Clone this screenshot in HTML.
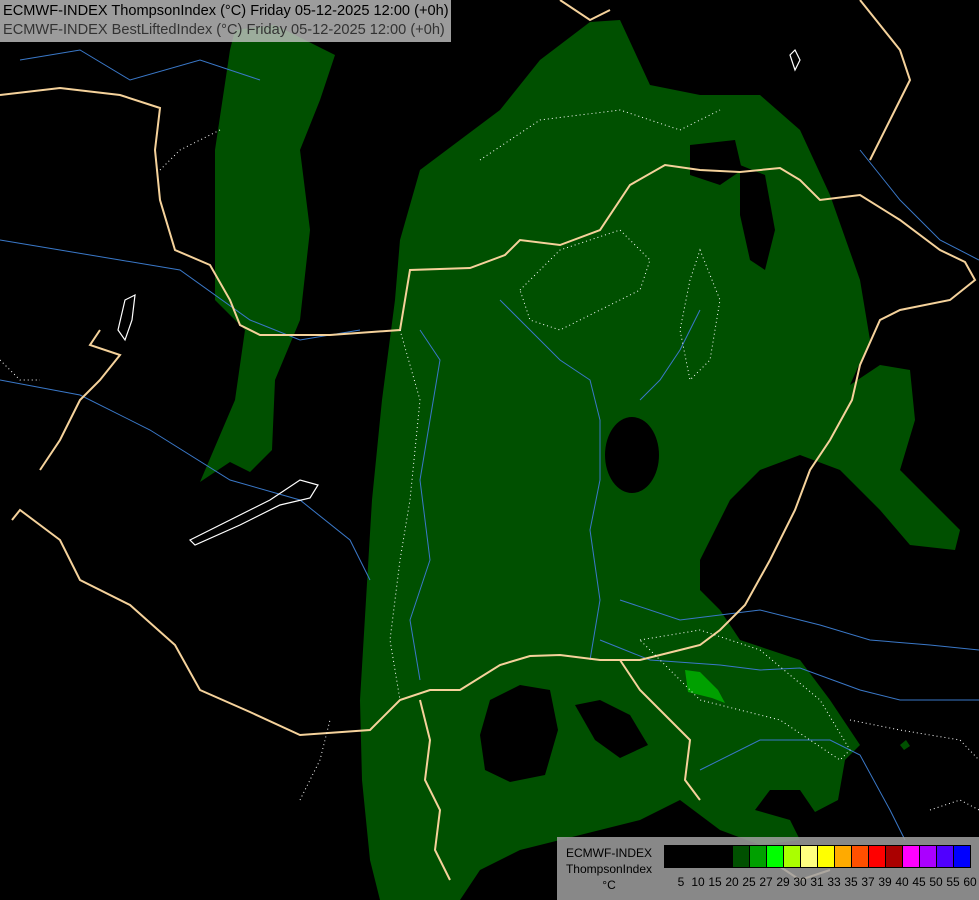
<!DOCTYPE html>
<html><head><meta charset="utf-8"><style>
html,body{margin:0;padding:0;background:#000;}
#w{position:relative;width:979px;height:900px;overflow:hidden;background:#000;font-family:"Liberation Sans",sans-serif;}
svg{position:absolute;left:0;top:0;}
.hdr{position:absolute;left:0;top:0;width:451px;height:42px;background:rgba(200,200,200,0.78);font-size:14.6px;line-height:19px;padding-left:3px;box-sizing:border-box;padding-top:2px;white-space:nowrap;}
.hdr div:nth-child(2){color:#333;}
.leg{position:absolute;left:557px;top:837px;width:422px;height:63px;background:rgba(160,160,160,0.85);}
.lt{position:absolute;left:0;width:104px;text-align:center;font-size:12px;color:#000;line-height:16px;top:8px;}
.bar{position:absolute;left:107px;top:8px;display:flex;border:1px solid #000;}
.bar span{width:16px;height:21px;border-right:1px solid #000;}
.bar span:last-child{border-right:none;}
.nums{position:absolute;left:107px;top:38px;font-size:12px;}
.nums span{position:absolute;transform:translateX(-50%);}
</style></head><body><div id="w">
<svg width="979" height="900" viewBox="0 0 979 900">
<g fill="#005000">
<path d="M590,22 L620,20 L650,85 L700,95 L760,95 L800,130 L830,195 L860,280 L870,340 L850,385 L880,365 L910,370 L915,420 L900,470 L930,500 L960,530 L955,550 L910,545 L880,510 L840,470 L800,455 L760,470 L730,500 L700,560 L700,590 L720,610 L740,640 L800,660 L830,700 L860,745 L845,760 L838,800 L815,812 L800,790 L770,790 L755,810 L790,820 L800,840 L760,845 L720,830 L680,800 L640,820 L600,830 L560,840 L520,850 L480,870 L460,900 L380,900 L370,860 L362,780 L360,700 L366,600 L372,500 L382,400 L395,300 L400,240 L420,170 L460,140 L500,110 L540,60 Z"/>
<path d="M235,30 L275,25 L335,55 L320,100 L300,150 L310,230 L300,320 L275,380 L272,450 L250,472 L230,462 L200,482 L235,400 L245,330 L215,300 L215,150 L230,50 Z"/>
</g>
<g fill="#000">
<ellipse cx="632" cy="455" rx="27" ry="38"/>
<path d="M490,700 L520,685 L550,690 L558,730 L545,775 L510,782 L485,770 L480,735 Z"/>
<path d="M575,705 L600,700 L630,715 L648,745 L620,758 L595,740 Z"/>
<path d="M690,145 L735,140 L742,170 L720,185 L690,175 Z"/>
<path d="M740,165 L765,175 L775,230 L765,270 L750,260 L740,215 Z"/>
<path d="M600,900 L590,880 L640,860 L720,860 L740,880 L740,900 Z"/>
</g>
<path d="M685,670 L700,672 L718,690 L725,703 L712,698 L688,692 Z" fill="#00a000"/>
<path d="M900,745 l6,-5 l4,6 l-6,4z" fill="#005000"/>
<g fill="none" stroke="#3a78c8" stroke-width="1">
<path d="M600,640 L650,660 L720,665 L760,670 L800,668 L860,690 L900,700 L979,700"/>
<path d="M620,600 L680,620 L760,610 L820,625 L870,640 L930,645 L979,650"/>
<path d="M700,770 L760,740 L830,740 L860,755 L890,810 L905,840"/>
<path d="M0,240 L60,250 L120,260 L180,270 L250,320 L300,340 L360,330"/>
<path d="M500,300 L530,330 L560,360 L590,380 L600,420 L600,480 L590,530 L600,600 L590,660"/>
<path d="M420,330 L440,360 L430,420 L420,480 L430,560 L410,620 L420,680"/>
<path d="M0,380 L80,395 L150,430 L230,480 L300,500 L350,540 L370,580"/>
<path d="M860,150 L900,200 L940,240 L979,260"/>
<path d="M20,60 L80,50 L130,80 L200,60 L260,80"/>
<path d="M700,310 L680,350 L660,380 L640,400"/>
</g>
<g fill="none" stroke="#f5d29b" stroke-width="2">
<path d="M0,95 L60,88 L120,95 L160,108 L155,150 L160,200 L175,250 L210,265 L230,300 L240,325 L260,335 L330,335 L400,330 L405,300 L410,270 L470,268 L505,255 L520,240 L560,245 L600,230 L630,185 L665,165 L700,170 L740,172 L780,168 L800,180 L820,200 L860,195 L900,220 L940,250 L965,262 L975,280 L950,300 L900,310 L880,320 L860,365 L852,400 L830,440 L810,470 L795,510 L770,560 L745,605 L720,630 L700,645 L680,650 L640,660 L600,660 L560,655 L530,656 L500,665 L460,690 L430,690 L400,700 L370,730 L300,735 L250,712 L200,690 L175,645 L130,605 L80,580 L60,540 L20,510 L12,520"/>
<path d="M100,330 L90,345 L120,355 L100,380 L80,400 L60,440 L40,470"/>
<path d="M420,700 L430,740 L425,780 L440,810 L435,850 L450,880"/>
<path d="M620,660 L640,690 L670,720 L690,740 L685,780 L700,800"/>
<path d="M560,0 L590,20 L610,10"/>
<path d="M860,0 L900,50 L910,80 L890,120 L870,160"/>
<path d="M770,860 L800,880 L830,870"/>
</g>
<g fill="none" stroke="#fff" stroke-width="1.2">
<path d="M190,540 L230,520 L270,500 L300,480 L318,485 L310,498 L280,505 L240,525 L195,545 Z"/>
<path d="M125,300 L135,295 L132,320 L125,340 L118,330 Z"/>
<path d="M790,55 l5,-5 l5,10 l-5,10z"/>
</g>
<g fill="none" stroke="#fff" stroke-width="1" stroke-dasharray="1,3">
<path d="M480,160 L540,120 L620,110 L680,130 L720,110"/>
<path d="M520,290 L560,250 L620,230 L650,260 L640,290 L600,310 L560,330 L530,320 Z"/>
<path d="M700,250 L720,300 L710,360 L690,380 L680,330 L690,280 Z"/>
<path d="M640,640 L700,630 L760,650 L820,700 L850,750 L840,760 L780,720 L700,700 Z"/>
<path d="M400,330 L420,400 L410,500 L400,560 L390,640 L400,700"/>
<path d="M0,360 L20,380 L40,380"/>
<path d="M850,720 L900,730 L960,740 L979,760"/>
<path d="M930,810 L960,800 L979,810"/>
<path d="M160,170 L180,150 L220,130"/>
<path d="M300,800 L320,760 L330,720"/>
</g>
</svg>
<div class="hdr"><div>ECMWF-INDEX ThompsonIndex (°C) Friday 05-12-2025 12:00 (+0h)</div><div>ECMWF-INDEX BestLiftedIndex (°C) Friday 05-12-2025 12:00 (+0h)</div></div>
<div class="leg">
<div class="lt">ECMWF-INDEX<br>ThompsonIndex<br>°C</div>
<div class="bar">
<span style="background:#000"></span><span style="background:#000"></span><span style="background:#000"></span><span style="background:#000"></span><span style="background:#005000"></span><span style="background:#00a000"></span><span style="background:#00ff00"></span><span style="background:#aaff00"></span><span style="background:#ffff80"></span><span style="background:#ffff00"></span><span style="background:#ffaa00"></span><span style="background:#ff5000"></span><span style="background:#ff0000"></span><span style="background:#aa0000"></span><span style="background:#ff00ff"></span><span style="background:#aa00ff"></span><span style="background:#5000ff"></span><span style="background:#0000ff"></span>
</div>
<div class="nums">
<span style="left:17px">5</span><span style="left:34px">10</span><span style="left:51px">15</span><span style="left:68px">20</span><span style="left:85px">25</span><span style="left:102px">27</span><span style="left:119px">29</span><span style="left:136px">30</span><span style="left:153px">31</span><span style="left:170px">33</span><span style="left:187px">35</span><span style="left:204px">37</span><span style="left:221px">39</span><span style="left:238px">40</span><span style="left:255px">45</span><span style="left:272px">50</span><span style="left:289px">55</span><span style="left:306px">60</span>
</div>
</div>
</div></body></html>
